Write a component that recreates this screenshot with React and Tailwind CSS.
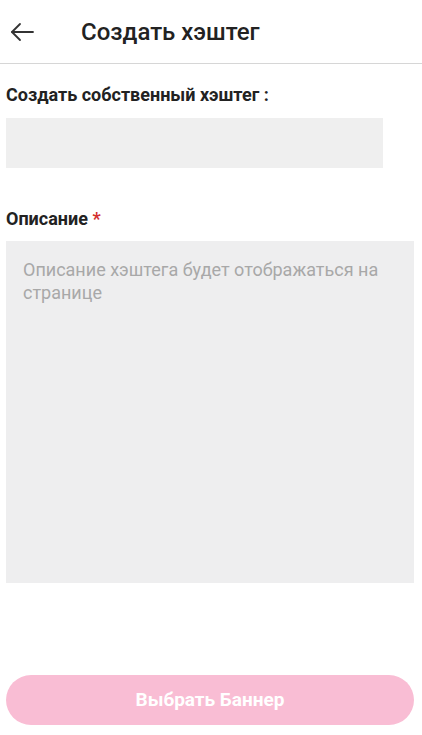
export default function App() {
  return (
    <div className="w-[422px] h-[735px] bg-white flex flex-col font-['Roboto',sans-serif] overflow-hidden">
      <div className="h-[64px] flex items-center border-b border-[#d6d6d6] shrink-0">
        <div className="w-[81px] pl-[10px] flex items-center">
          <svg width="24" height="20" viewBox="0 0 24 20" fill="none" stroke="#333" strokeWidth="1.8" strokeLinecap="round" strokeLinejoin="round">
            <path d="M23 10H2" />
            <path d="M10 2L2 10L10 18" />
          </svg>
        </div>
        <div className="text-[24px] font-medium text-[#222] leading-[30px]">Создать хэштег</div>
      </div>
      <div className="px-[6px] pt-[19px] flex flex-col flex-1">
        <div className="text-[18px] font-bold text-[#222] leading-[24px]">Создать собственный хэштег :</div>
        <div className="mt-[11px] w-[377px] h-[50px] bg-[#efefef]"></div>
        <div className="mt-[39px] text-[18px] font-bold text-[#222] leading-[24px]">
          Описание <span className="text-[#d32f2f]">*</span>
        </div>
        <div className="mt-[10px] w-[408px] h-[342px] bg-[#eeeeef] px-[17px] pt-[17px]">
          <div className="text-[18px] leading-[23px] text-[#a8a8a8]">Описание хэштега будет отображаться на странице</div>
        </div>
        <div className="mt-[92px] w-[408px] h-[50px] rounded-full bg-[#f9bdd4] flex items-center justify-center">
          <span className="text-[19px] font-bold text-white">Выбрать Баннер</span>
        </div>
      </div>
    </div>
  );
}
